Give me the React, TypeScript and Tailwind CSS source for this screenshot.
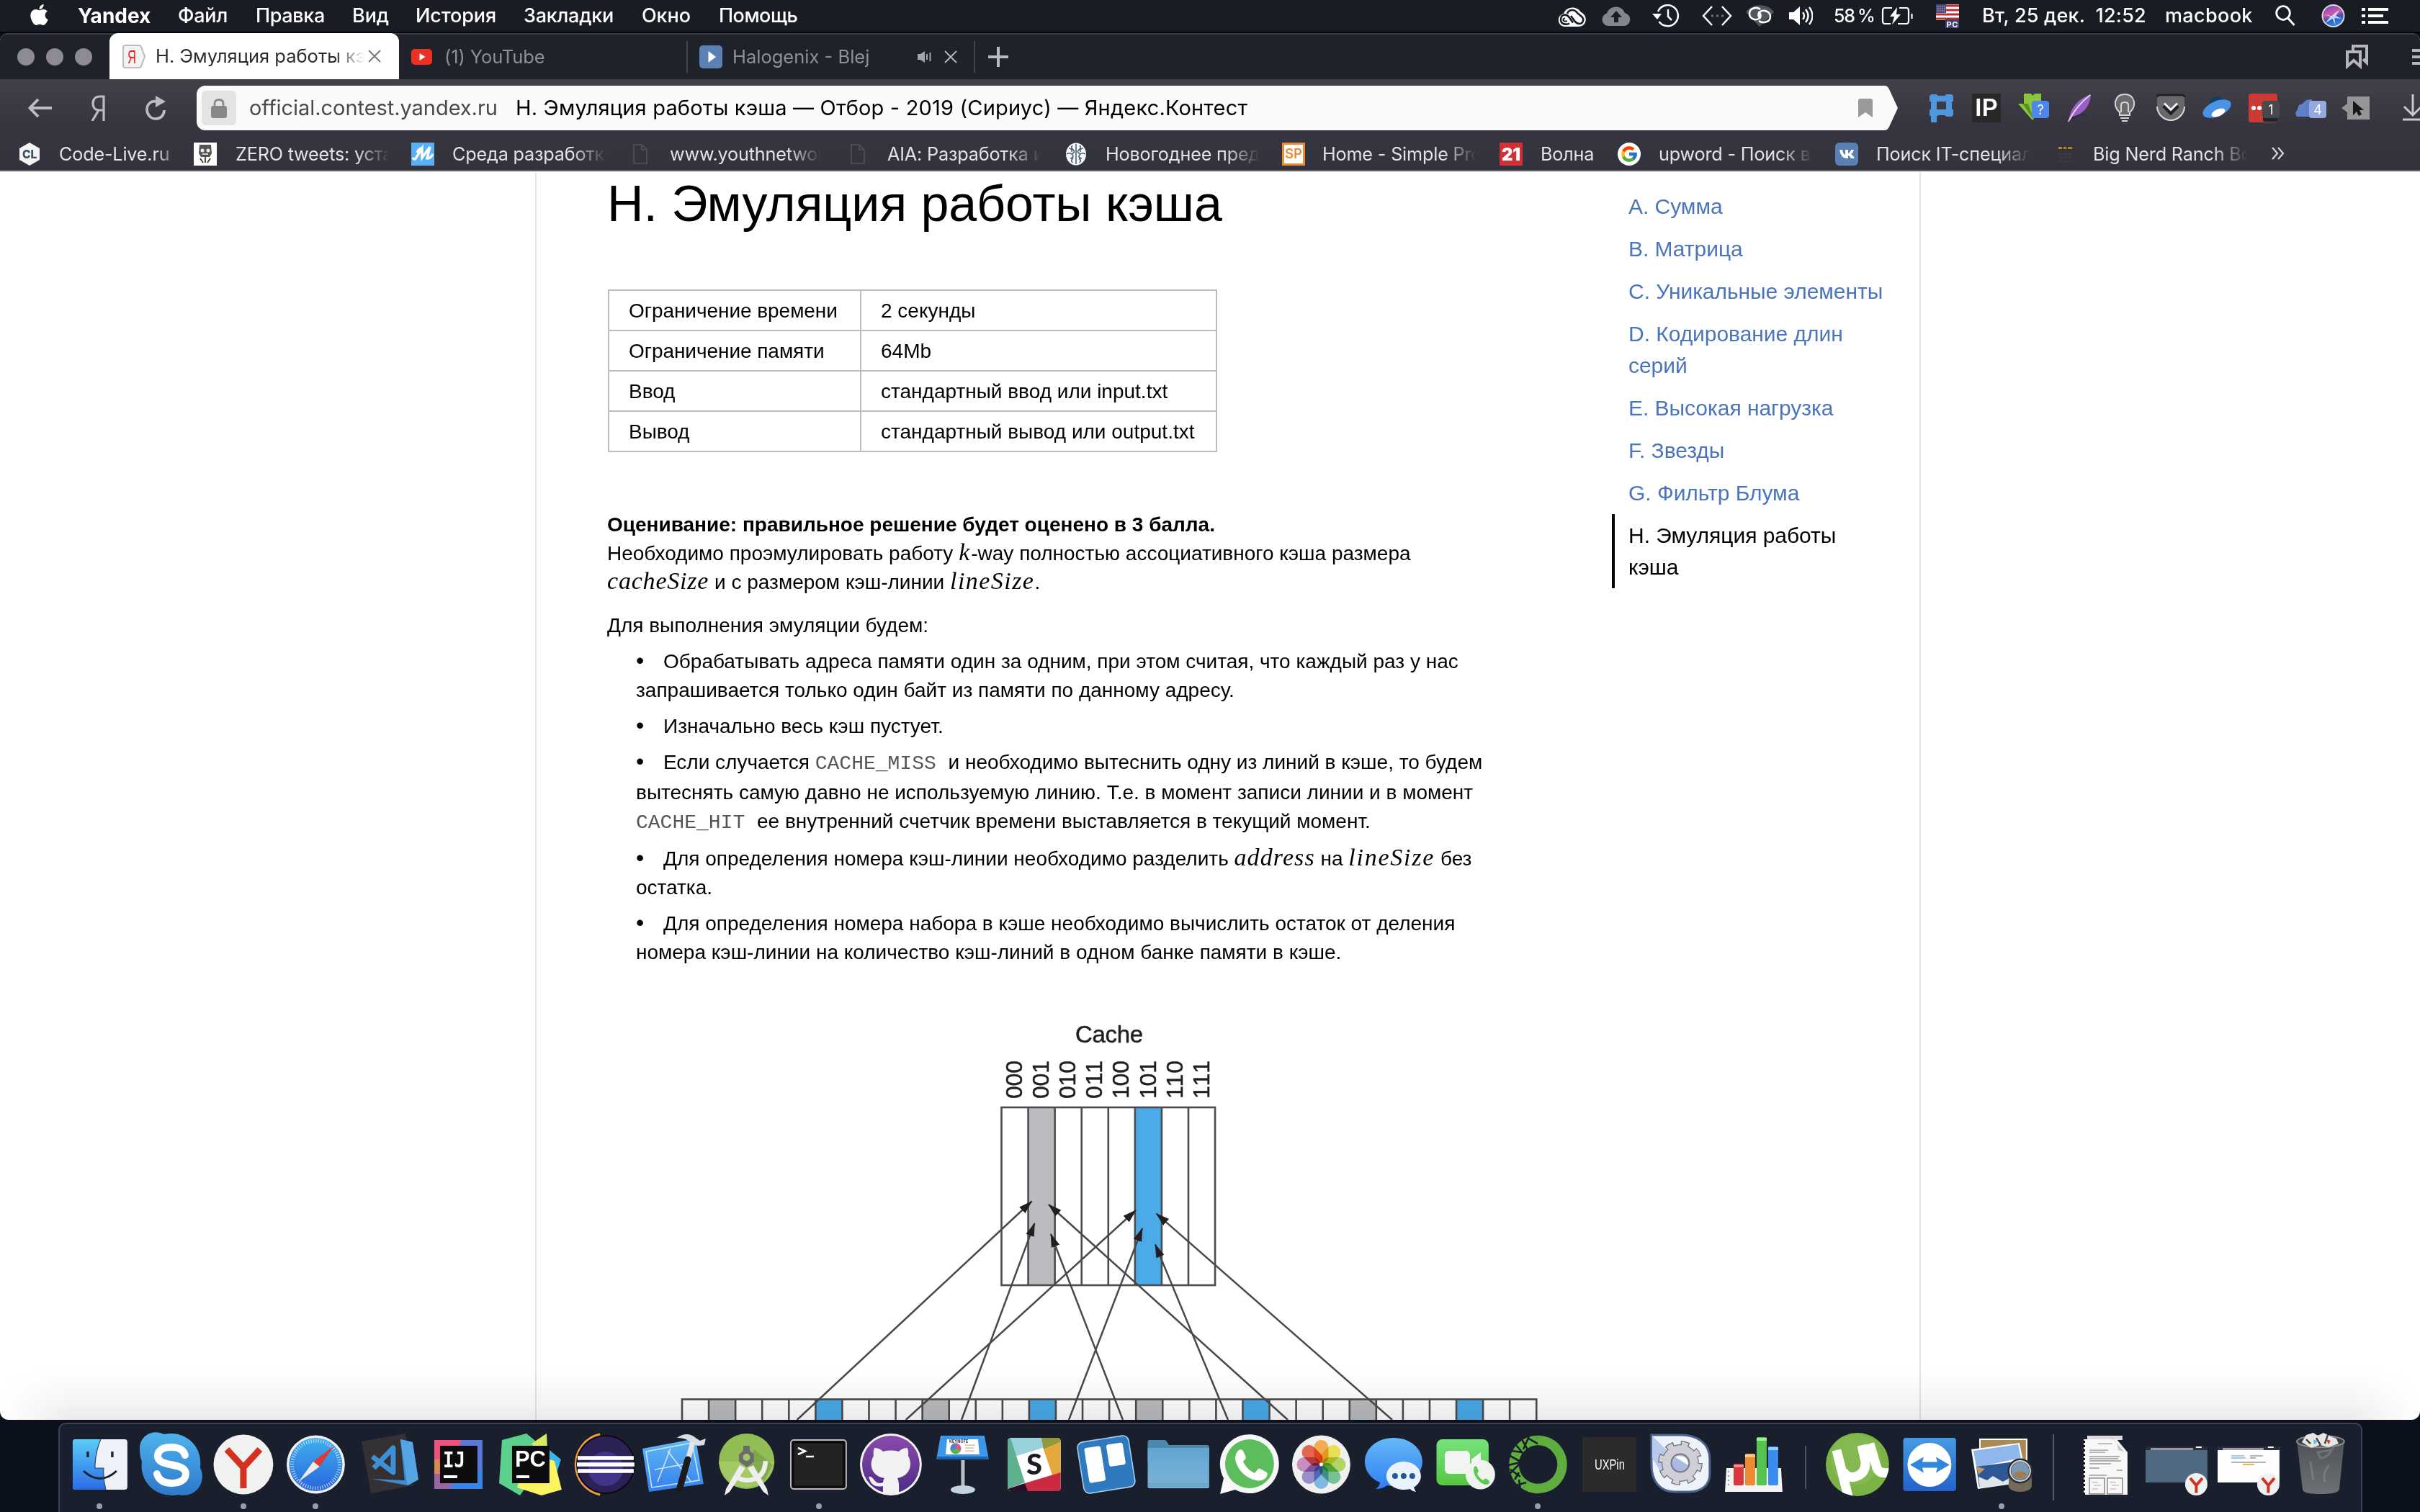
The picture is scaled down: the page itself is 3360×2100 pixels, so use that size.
import type { ReactNode } from 'react';
import { FaApple } from 'react-icons/fa';
import { FcGoogle } from 'react-icons/fc';

/* ---------- macOS menu bar ---------- */

const menus = [
  { label: 'Yandex', cls: 'w-[139px] font-bold text-[28px]' },
  { label: 'Файл', cls: 'w-[108px] tracking-[-0.2px]' },
  { label: 'Правка', cls: 'w-[134px] tracking-[-0.35px]' },
  { label: 'Вид', cls: 'w-[88px] tracking-[-0.1px]' },
  { label: 'История', cls: 'w-[150px] tracking-[-0.13px]' },
  { label: 'Закладки', cls: 'w-[164px] tracking-[-0.24px]' },
  { label: 'Окно', cls: 'w-[107px] tracking-[-0.1px]' },
  { label: 'Помощь', cls: 'tracking-[-0.5px]' },
];

function MenuBar() {
  return (
    <header className="flex h-[46px] shrink-0 items-center border-b-2 border-[#04070f] bg-[#1a1c24] font-['Inter',sans-serif] text-[27px] leading-[44px] font-medium whitespace-pre text-white">
      <FaApple className="mr-[39px] ml-[40px] h-[33px] w-[29px] -translate-y-[2px]" />
      {menus.map((m) => (
        <span key={m.label} className={m.cls}>
          {m.label}
        </span>
      ))}
      <div className="ml-auto flex w-[1197px] shrink-0 items-center">
        <svg className="mt-[3px] mr-[20px] h-[28px] w-[40px]" viewBox="0 0 40 28" fill="none">
          <path d="M13 27H11C-2 27-2 11 8 9 12-2 27-2 32 7c10 4 9 20-4 20Z" fill="#fff" />
          <path d="M16 22.500c-3 2-12 2-12-5 0-8 8-9 12-3l5 7" stroke="#1a1c24" strokeWidth="2.600" />
          <path d="M13 9c2-6 10-7 14-1l7 6c3 4 0 9-4 9-5 0-7-4-9-7l-3-4" stroke="#1a1c24" strokeWidth="2.600" />
          <path d="M10 15.500c-3 0-4 4 0 4h3" stroke="#1a1c24" strokeWidth="2" />
        </svg>
        <svg className="mr-[29px] h-[28px] w-[42px]" viewBox="0 0 42 28">
          <path d="M9 28A9 9 0 0 1 8 10.500 13 12 0 0 1 33 10 9.200 9.200 0 0 1 33 28Z" fill="#84868c" />
          <path d="M21 7l-8 9h5v7h6v-7h5z" fill="#1a1c24" />
        </svg>
        <svg className="mr-[31px] h-[32px] w-[38px]" viewBox="0 0 38 32" fill="none" stroke="#fff" strokeWidth="2.500">
          <path d="M8 10A14.500 14.500 0 1 1 9.500 24" />
          <path d="M22 7v10l5 5" />
          <path d="M0 13h13l-6 8z" fill="#fff" stroke="none" />
        </svg>
        <svg className="mr-[19px] h-[28px] w-[42px]" viewBox="0 0 42 28" fill="none" stroke="#fff" strokeWidth="2.500">
          <path d="M14 1 2 14l12 13M28 1l12 13-12 13" />
          <path d="M13 14h3M20 14h3M27 14h3" stroke="#6d6f76" strokeWidth="3" />
        </svg>
        <svg className="mr-[21px] h-[30px] w-[39px]" viewBox="0 0 39 30" fill="none">
          <path d="M0 10C8-3 31-3 39 10L19 30z" fill="#54565d" />
          <path d="M20 6c-5-4-15-2-15 6 0 7 8 10 13 7 4-3 3-8-1-9" stroke="#fff" strokeWidth="2.600" />
          <path d="M18 22c5 4 16 2 16-6 0-7-9-10-14-7-4 3-3 8 1 9" stroke="#fff" strokeWidth="2.600" />
        </svg>
        <svg className="mr-[29px] h-[28px] w-[33px]" viewBox="0 0 33 28" fill="none" stroke="#fff" strokeWidth="2.400">
          <path d="M0 9h6l9-8v26l-9-8H0z" fill="#fff" stroke="none" />
          <path d="M19 9q4 5 0 10M23 5q7 9 0 18M28 2q9 12 0 24" />
        </svg>
        <span className="w-[66px] text-[25px] tracking-[-1.3px] [word-spacing:-1px]">58 %</span>
        <svg className="mr-[31px] h-[26px] w-[45px]" viewBox="0 0 45 26" fill="none" stroke="#fff" strokeWidth="2.200">
          <path d="M15 2H5Q2 2 2 6v14q0 4 3 4h8M25 2h10q3 0 3 4v14q0 4-3 4H23M42.500 10v7" />
          <path d="M22 1 12 14h6l-3 11 12-14h-6z" fill="#fff" stroke="none" />
        </svg>
        <svg className="mr-[32px] h-[34px] w-[32px]" viewBox="0 0 32 34">
          <path d="M0 1h32v22H0z" fill="#fff" />
          <path d="M14 3h18M14 9h18M0 15h32M0 21h32" stroke="#b5302f" strokeWidth="3.200" />
          <path d="M0 1h14v12H0z" fill="#4a4878" />
          <path d="M2 4h11M2 7h11M2 10h11" stroke="#d8d8e6" strokeWidth="1" strokeDasharray="1.500 1.500" />
          <path d="M13 22h19v12H13z" fill="#43416f" />
          <text x="14.500" y="32.500" fontSize="11" fontWeight="700" fill="#fff" textLength="16">PC</text>
        </svg>
        <span className="w-[254px] tracking-[0.19px]">Вт, 25 дек.{'  '}12:52</span>
        <span className="w-[153px] tracking-[0.35px]">macbook</span>
        <svg className="mr-[36px] h-[30px] w-[28px]" viewBox="0 0 28 30" fill="none" stroke="#fff" strokeWidth="2.800">
          <circle cx="11" cy="11" r="9.300" />
          <path d="m17.500 18 9 10" />
        </svg>
        <svg className="mr-[23px] h-[34px] w-[33px]" viewBox="0 0 34 34">
          <defs>
            <linearGradient id="siri" x1=".3" y1="0" x2=".6" y2="1">
              <stop offset="0" stopColor="#6a4fc8" />
              <stop offset=".4" stopColor="#d8559f" />
              <stop offset=".6" stopColor="#3a53b8" />
              <stop offset="1" stopColor="#2f8fe8" />
            </linearGradient>
          </defs>
          <circle cx="17" cy="17" r="15.500" fill="url(#siri)" stroke="#d7d9e4" strokeWidth="2" />
          <path d="m17 15 9-7-5 9 8 4-10-1 1 10-4-9-10 6 7-9-9-3 11 2z" fill="#cfeeff" fillOpacity=".85" />
        </svg>
        <svg className="h-[22px] w-[37px]" viewBox="0 0 37 22" fill="#fff">
          <path d="M0 0h5v4H0zM9 0h28v4H9zM0 9h5v4H0zM9 9h21v4H9zM0 18h5v4H0zM9 18h28v4H9z" />
        </svg>
      </div>
    </header>
  );
}

/* ---------- Browser chrome ---------- */

function Close({ className }: { className: string }) {
  return (
    <svg className={className} viewBox="0 0 18 18" fill="none" strokeWidth="2">
      <path d="m1 1 16 16M17 1 1 17" stroke="currentColor" />
    </svg>
  );
}

function TabBar() {
  return (
    <div className="flex h-[64px] shrink-0 items-stretch border-t-2 border-[#353a45] bg-[#20222b] font-['Inter',sans-serif] text-[25.5px] whitespace-nowrap text-[#8f9095]">
      <div className="flex w-[152px] items-center gap-[16px] pl-[24px]">
        <i className="size-[24px] rounded-full bg-[#8e8c92]" />
        <i className="size-[24px] rounded-full bg-[#8e8c92]" />
        <i className="size-[24px] rounded-full bg-[#8e8c92]" />
      </div>
      <div className="-mt-[2px] flex w-[402px] items-center rounded-t-[12px] bg-white pl-[18px] text-[#2c2c2c]">
        <svg className="mr-[14px] h-[33px] w-[32px] shrink-0" viewBox="0 0 32 33">
          <path d="M4 1h19q2 0 3 2l5 13.500L26 30q-1 2-3 2H4q-3 0-3-3V4q0-3 3-3Z" fill="#f3f3f3" stroke="#bdbdbd" strokeWidth="2" />
          <text x="7" y="26" fontSize="26" fontFamily="Liberation Sans" fill="#d6281f" textLength="12" lengthAdjust="spacingAndGlyphs">Я</text>
        </svg>
        <span className="w-[290px] overflow-hidden [mask-image:linear-gradient(to_right,black_86%,transparent_100%)]">H. Эмуляция работы кэша</span>
        <Close className="ml-[5px] size-[18px] text-[#77777b]" />
      </div>
      <div className="flex w-[399px] items-center pl-[17px]">
        <svg className="mr-[17px] h-[22px] w-[29px]" viewBox="0 0 29 22">
          <rect width="29" height="22" rx="5" fill="#e93223" />
          <path d="m11.500 6 8 5-8 5z" fill="#fff" />
        </svg>
        <span className="tracking-[-0.1px]">(1) YouTube</span>
      </div>
      <div className="flex w-[399px] items-center">
        <i className="mr-[16px] h-[44px] w-[2px] bg-[#43454d]" />
        <svg className="mr-[14px] size-[32px]" viewBox="0 0 32 32">
          <rect width="32" height="32" rx="5" fill="#5a80b4" />
          <path d="m12.500 8 10.500 8-10.500 8z" fill="#fff" />
        </svg>
        <span className="w-[257px]">Halogenix - Blej</span>
        <svg className="mr-[18px] h-[16px] w-[19px]" viewBox="0 0 19 16" stroke="#a5a6aa" fill="none" strokeWidth="2">
          <path d="M0 4h4l6-4v16l-6-4H0z" fill="#a5a6aa" stroke="none" />
          <path d="M13 4v8M17.500 2v12" />
        </svg>
        <Close className="size-[18px] text-[#b6b7ba]" />
      </div>
      <div className="flex flex-1 items-center">
        <i className="mr-[18px] h-[44px] w-[2px] bg-[#43454d]" />
        <svg className="size-[28px]" viewBox="0 0 28 28" stroke="#bcbcc0" strokeWidth="4">
          <path d="M14 0v28M0 14h28" />
        </svg>
        <svg className="mr-[60px] ml-auto h-[34px] w-[31px]" viewBox="0 0 31 34" fill="none" stroke="#b6b6ba" strokeWidth="4">
          <path d="M2 10h18v20l-9-8-9 8z" />
          <path d="M10 8V2h19v23l-5-5" />
        </svg>
        <svg className="h-[22px] w-[12px]" viewBox="0 0 12 22" stroke="#b6b6ba" strokeWidth="4">
          <path d="M1 2h11M1 11h11M1 20h11" />
        </svg>
      </div>
    </div>
  );
}

function Badge({ x, label, fill, y = 10 }: { x: number; label: string; fill: string; y?: number }) {
  return (
    <g>
      <rect x={x} y={y} width="24" height="24" rx="4" fill={fill} />
      <text x={x + 12} y={y + 19} fontSize="18" textAnchor="middle" fill="#fff">
        {label}
      </text>
    </g>
  );
}

function Extensions() {
  return (
    <div className="flex items-center font-['Inter',sans-serif]">
      <svg className="w-[60px]" height="40" viewBox="0 0 60 40" fill="none" stroke="#4f97dc" strokeWidth="8">
        <path d="M7 1v39M28 1v31M1 7h33M1 26h33" />
        <path d="M7 2v9M28 2v9M7 22v9M28 22v9" strokeWidth="11" />
      </svg>
      <svg className="w-[64px]" height="40" viewBox="0 0 64 40">
        <path d="M0 0h40v40H0z" fill="#2a2826" />
        <text x="4" y="31" fontSize="32" fontWeight="600" fill="#fff" textLength="32" lengthAdjust="spacingAndGlyphs">IP</text>
      </svg>
      <svg className="w-[69px]" height="40" viewBox="0 0 69 40">
        <path d="M8 0h10l2 3 3-3h9v10h7L20 37 0 14h8z" fill="#8cc63f" />
        <path d="M6 14h8l8 23z" fill="#5c8f22" />
        <Badge x={19} label="?" fill="#4f86ec" />
      </svg>
      <svg className="w-[64px]" height="40" viewBox="0 0 64 40">
        <path d="M1 39C3 22 12 8 32 1c-1 16-10 28-26 31z" fill="#9a5fc4" />
        <path d="M1 39C7 26 18 12 31 2" stroke="#e8d3f5" strokeWidth="2" fill="none" />
        <path d="M2 39c8-8 16-13 25-8" stroke="#241f2c" strokeWidth="2" fill="none" opacity=".5" />
      </svg>
      <svg className="w-[59px]" height="40" viewBox="0 0 59 40" fill="none" stroke="#d6d6d6" strokeWidth="2">
        <path d="M8 26C-3 16 2 1 15 1s18 15 7 25v4H8z" fill="#6a6a6c" />
        <path d="M10 26V16q0-4 5-4t5 4v10M8 30h14M9 34h12M11 38h8" />
      </svg>
      <svg className="w-[64px]" height="40" viewBox="0 0 64 40">
        <path d="M3 3h34q2 0 2 2v12c0 11-9 20-19 20S1 28 1 17V5q0-2 2-2Z" fill="#69696b" />
        <path d="M1 18c0 10 9 19 19 19s19-9 19-19" fill="none" stroke="#d9d9d9" strokeWidth="2" />
        <path d="M1 5q0-3 3-3h32q3 0 3 3" fill="none" stroke="#1d1d20" strokeWidth="2.500" />
        <path d="m10 17 10 10 10-10" fill="none" stroke="#1f2026" strokeWidth="5" />
        <path d="m11 13.500 9 9 9-9" fill="none" stroke="#f4f4f4" strokeWidth="3" />
      </svg>
      <svg className="w-[64px]" height="40" viewBox="0 0 64 40">
        <path d="M9 16C12 2 26 1 34 12z" fill="#123c66" />
        <ellipse cx="20" cy="21" rx="21" ry="10.500" transform="rotate(-24 20 21)" fill="#4a92e6" />
        <ellipse cx="22" cy="26.500" rx="10" ry="5" transform="rotate(-24 22 26.500)" fill="#fff" />
      </svg>
      <svg className="w-[64px]" height="40" viewBox="0 0 64 40">
        <rect width="40" height="40" rx="4" fill="#cc3b33" />
        <circle cx="7" cy="20" r="3" fill="#fff" />
        <circle cx="15" cy="20" r="3" fill="#fff" />
        <rect x="20" y="26" width="20" height="13" rx="3" fill="#17272f" />
        <Badge x={19} label="1" fill="#48494b" />
      </svg>
      <svg className="w-[65px]" height="40" viewBox="0 0 65 40">
        <path d="M3 32q-4-5 1-10 0-7 7-8Q15 7 24 8v24z" fill="#5f7fc6" />
        <Badge x={20} label="4" fill="#94aadf" />
      </svg>
      <svg className="w-[85px]" height="40" viewBox="0 0 85 40">
        <path d="M8 4h31v32H8V26l-8-6 8-6z" fill="#959597" />
        <path d="M16 10v20l5-5 3 6 4-2-3-6h6z" fill="#17171a" />
      </svg>
      <svg className="w-[24px]" height="40" viewBox="0 0 24 40" fill="none" stroke="#c9c9cc" strokeWidth="3">
        <path d="M14 1v27M2 18l12 12 12-12M0 36h28" />
      </svg>
    </div>
  );
}

function Toolbar() {
  return (
    <div className="flex h-[80px] shrink-0 items-center font-['Inter',sans-serif] text-[29px] whitespace-nowrap">
      <svg className="mr-[54px] ml-[39px] h-[26px] w-[33px]" viewBox="0 0 33 26" fill="none" stroke="#bdbdc1" strokeWidth="3.800">
        <path d="M14 1 2.500 13 14 25M3 13h30" />
      </svg>
      <svg className="mr-[56px] h-[36px] w-[20px]" viewBox="0 0 20 36" fill="none" stroke="#bdbdc1" strokeWidth="3.200">
        <path d="M18 36V2h-5C6 2 3 6 3 12c0 5 3 9 9 9h6M11 21 2 36" />
      </svg>
      <svg className="mr-[43px] h-[34px] w-[28px]" viewBox="0 0 28 34" fill="none" stroke="#bdbdc1" strokeWidth="3.600">
        <path d="M15 8C8 6 2 12 2 19c0 7 5 13 12 13s12-5 12-12" />
        <path d="m14 0 14 8-14 8z" fill="#bdbdc1" stroke="none" />
      </svg>
      <div className="flex h-[62px] w-[2343px] items-center rounded-l-[12px] bg-[#fafafa] pl-[7px]">
        <div className="flex h-[48px] w-[48px] items-center justify-center rounded-[6px] bg-[#e4e4e4]">
          <svg className="h-[27px] w-[22px]" viewBox="0 0 22 27">
            <rect y="10" width="22" height="17" rx="3" fill="#888" />
            <path d="M5 11V7q0-5.500 6-5.500T17 7v4" fill="none" stroke="#888" strokeWidth="2.800" />
          </svg>
        </div>
        <span className="ml-[18px] w-[370px] tracking-[-0.05px] text-[#4a4a4a]">official.contest.yandex.ru</span>
        <span className="tracking-[0.18px] text-black">H. Эмуляция работы кэша — Отбор - 2019 (Сириус) — Яндекс.Контест</span>
        <svg className="mr-[16px] ml-auto h-[26px] w-[20px]" viewBox="0 0 20 26">
          <path d="M3 0h14q3 0 3 3v23l-10-7-10 7V3q0-3 3-3Z" fill="#9a9a9a" />
        </svg>
      </div>
      <svg className="mr-[43px] h-[62px] w-[19px]" viewBox="0 0 19 62">
        <path d="M0 0q5 0 7 5l12 26L7 57q-2 5-7 5z" fill="#fafafa" />
      </svg>
      <Extensions />
    </div>
  );
}

function PageIcon() {
  return (
    <svg className="h-[28px] w-[20px]" viewBox="0 0 20 28" fill="none" stroke="#4b4b4b" strokeWidth="2">
      <path d="M1 1h11l7 7v19H1zM12 1v7h7" />
    </svg>
  );
}

const bookmarks: { icon: ReactNode; label: string; box: string; pad: string; text: string }[] = [
  {
    icon: (
      <svg className="size-[32px]" viewBox="0 0 32 32">
        <path d="M16 0 30 8v16l-14 8L2 24V8z" fill="#f4f4f4" />
        <text x="6" y="22" fontSize="16" fontWeight="800" fill="#3b5161" textLength="20" lengthAdjust="spacingAndGlyphs">CL</text>
      </svg>
    ),
    label: 'Code-Live.ru', box: 'w-[244px]', pad: 'w-[57px]', text: 'w-[170px]',
  },
  {
    icon: (
      <svg className="size-[32px]" viewBox="0 0 32 32">
        <path d="M0 0h32v32H0z" fill="#fff" />
        <path d="M8 3h16l1 12-3 5H10l-3-5z" fill="#555" />
        <circle cx="12" cy="11" r="2.500" fill="#eee" />
        <circle cx="20" cy="11" r="2.500" fill="#eee" />
        <path d="M13 17h6M16 20v8M9 22l4 6M23 22l-4 6" stroke="#444" strokeWidth="2" />
        <path d="M12 16h8" stroke="#fff" strokeWidth="1.500" />
      </svg>
    ),
    label: 'ZERO tweets: установка', box: 'w-[302px]', pad: 'w-[58px]', text: 'w-[214px]',
  },
  {
    icon: (
      <svg className="size-[32px]" viewBox="0 0 32 32">
        <path d="M0 0h32v32H0z" fill="#58b1f3" />
        <path d="M2 21q3 5 6-2L15 8v13L26 6l-4 16q4 1 8-6M8 14q3-7 8-6" fill="none" stroke="#fff" strokeWidth="3.400" />
      </svg>
    ),
    label: 'Среда разработки', box: 'w-[308px]', pad: 'w-[57px]', text: 'w-[214px]',
  },
  { icon: <PageIcon />, label: 'www.youthnetwork', box: 'w-[302px]', pad: 'w-[51px]', text: 'w-[210px]' },
  { icon: <PageIcon />, label: 'AIA: Разработка ин', box: 'w-[297px]', pad: 'w-[51px]', text: 'w-[214px]' },
  {
    icon: (
      <svg className="size-[32px]" viewBox="0 0 32 32" fill="none" stroke="#4b6072" strokeWidth="1.600">
        <ellipse cx="16" cy="16" rx="14" ry="15.500" fill="#f5f7f8" stroke="none" />
        <path d="M16 2v28M11 4q-3 3 1 6t-2 6M6 8q5 0 4 5M3 16q5-3 8 1t-3 5M12 22q-4 2-1 6M21 4q3 3-1 6t2 6M26 8q-5 0-4 5M29 16q-5-3-8 1t3 5M20 22q4 2 1 6" />
      </svg>
    ),
    label: 'Новогоднее предл', box: 'w-[302px]', pad: 'w-[57px]', text: 'w-[214px]',
  },
  {
    icon: (
      <svg className="size-[32px]" viewBox="0 0 32 32">
        <path d="M1.500 1.500h29v29h-29z" fill="#fff" stroke="#ea8b36" strokeWidth="3" />
        <text x="4" y="22" fontSize="18" fontWeight="600" fill="#ea8b36" textLength="24" lengthAdjust="spacingAndGlyphs">SP</text>
      </svg>
    ),
    label: 'Home - Simple Prog', box: 'w-[302px]', pad: 'w-[56px]', text: 'w-[214px]',
  },
  {
    icon: (
      <svg className="size-[32px]" viewBox="0 0 32 32">
        <path d="M0 0h32v32H0z" fill="#cf3035" />
        <text x="3" y="25" fontSize="24" fontWeight="900" fill="#fff" textLength="26" lengthAdjust="spacingAndGlyphs">21</text>
      </svg>
    ),
    label: 'Волна', box: 'w-[164px]', pad: 'w-[57px]', text: 'w-[100px]',
  },
  {
    icon: (
      <span className="flex size-[32px] items-center justify-center rounded-full bg-white">
        <FcGoogle className="size-[26px]" />
      </span>
    ),
    label: 'upword - Поиск в Google', box: 'w-[302px]', pad: 'w-[57px]', text: 'w-[214px]',
  },
  {
    icon: (
      <svg className="size-[32px]" viewBox="0 0 32 32">
        <rect width="32" height="32" rx="6" fill="#5a80b4" />
        <path d="M6 10h4q1 6 4 7v-7h4v5q3-1 4-5h4q-1 4-4 6 3 2 5 6h-5q-1-3-4-4v4h-2Q8 22 6 10Z" fill="#fff" />
      </svg>
    ),
    label: 'Поиск IT-специали', box: 'w-[306px]', pad: 'w-[57px]', text: 'w-[214px]',
  },
  {
    icon: (
      <svg className="h-[28px] w-[28px]" viewBox="0 0 28 28">
        <path d="M4 4h5v3H4zM11 4h4v3h-4zM17 4h6v3h-6z" fill="#b3812c" />
        <path d="M4 14h18M5 19h16M3 24h20" stroke="#3d3c3f" strokeWidth="2" strokeDasharray="5 2" />
      </svg>
    ),
    label: 'Big Nerd Ranch Books', box: 'w-[293px]', pad: 'w-[52px]', text: 'w-[214px]',
  },
];

function BookmarkBar() {
  return (
    <div className="flex h-[47px] shrink-0 items-center pt-[2px] pl-[25px] font-['Inter',sans-serif] text-[25.2px] tracking-[-0.17px] whitespace-nowrap text-[#e2e2e4]">
      {bookmarks.map((b) => (
        <div key={b.label} className={`flex shrink-0 items-center ${b.box}`}>
          <span className={`shrink-0 ${b.pad}`}>{b.icon}</span>
          <span className={`overflow-hidden [mask-image:linear-gradient(to_right,black_78%,transparent_100%)] ${b.text}`}>{b.label}</span>
        </div>
      ))}
      <svg className="-mt-[4px] ml-[7px] h-[18px] w-[18px]" viewBox="0 0 18 18" fill="none" stroke="#d8d8da" strokeWidth="2.200">
        <path d="m1 1 7 8-7 8M9 1l7 8-7 8" />
      </svg>
    </div>
  );
}

/* ---------- Page ---------- */

const limits = [
  ['Ограничение времени', '2 секунды'],
  ['Ограничение памяти', '64Mb'],
  ['Ввод', 'стандартный ввод или input.txt'],
  ['Вывод', 'стандартный вывод или output.txt'],
];

function M({ children, className = '' }: { children: string; className?: string }) {
  return <i className={`font-['Liberation_Serif',serif] text-[34px] leading-none ${className}`}>{children}</i>;
}

function Code({ children }: { children: string }) {
  return <code className="font-['Liberation_Mono',monospace] text-[28px] leading-none text-[#555]">{children}&nbsp;</code>;
}

function Item({ children, className = 'mt-[10px]' }: { children: ReactNode; className?: string }) {
  return (
    <li className={`ml-[40px] ${className}`}>
      <span className="inline-block w-[38px] text-[32px] leading-none">•</span>
      {children}
    </li>
  );
}

const COL = 37.07;
const arrows: [number, number, number, number][] = [
  [1106.6, 1972, 1432.5, 1668.5],
  [1335, 1972, 1436.4, 1699],
  [1788, 1972, 1456, 1673],
  [1559, 1972, 1459, 1714],
  [1257.7, 1972, 1577, 1681],
  [1484, 1972, 1586, 1706],
  [1933, 1972, 1605.6, 1685.6],
  [1705, 1972, 1604, 1728.5],
];

function CacheDiagram() {
  return (
    <svg className="block h-[630px] w-[1394px]" viewBox="843 1342 1394 630" fontFamily="Liberation Sans" fill="#231f20">
      <defs>
        <marker id="head" markerUnits="userSpaceOnUse" markerWidth="20" markerHeight="12" refX="18" refY="6" orient="auto">
          <path d="M0 0 19 6 0 12Z" fill="#231f20" />
        </marker>
      </defs>
      <g stroke="#231f20" strokeWidth=".5">
        <text x="1493" y="1448" fontSize="33" textLength="94">Cache</text>
        {['000', '001', '010', '011', '100', '101', '110', '111'].map((t, i) => (
          <text key={t} transform={`translate(${1419 + i * 37.1} 1526) rotate(-90)`} fontSize="32" textLength="53">
            {t}
          </text>
        ))}
      </g>
      <rect x={1390.5 + COL} y="1538" width={COL} height="247" fill="#bbbcc0" />
      <rect x={1390.5 + COL * 5} y="1538" width={COL} height="247" fill="#4aabe8" />
      <g stroke="#4d4b4c" strokeWidth="2.600" fill="none">
        <rect x="1390.5" y="1538" width={COL * 8} height="247" />
        {[1, 2, 3, 4, 5, 6, 7].map((i) => (
          <path key={i} d={`M${1390.5 + COL * i} 1538v247`} />
        ))}
      </g>
      {[1, 9, 17, 25].map((i) => (
        <rect key={i} x={947 + COL * i} y="1943" width={COL} height="40" fill="#bbbcc0" />
      ))}
      {[5, 13, 21, 29].map((i) => (
        <rect key={i} x={947 + COL * i} y="1943" width={COL} height="40" fill="#4aabe8" />
      ))}
      <g stroke="#4d4b4c" strokeWidth="2.600" fill="none">
        <rect x="947" y="1943.5" width={COL * 32} height="40" />
        {Array.from({ length: 31 }, (_, i) => (
          <path key={i} d={`M${947 + COL * (i + 1)} 1943v40`} />
        ))}
      </g>
      <g stroke="#4a4849" strokeWidth="2.500">
        {arrows.map(([x1, y1, x2, y2]) => (
          <line key={`${x1}`} x1={x1} y1={y1} x2={x2} y2={y2} markerEnd="url(#head)" />
        ))}
      </g>
    </svg>
  );
}

function Article() {
  return (
    <main className="w-[1394px] shrink-0 text-[28px] leading-[40px] whitespace-nowrap">
      <h1 className="mt-[4px] text-[70px] leading-[80px] tracking-[-0.1px]">H. Эмуляция работы кэша</h1>
      <div className="mt-[79px] ml-[1px] w-[846px] divide-y-2 divide-[#bdbdbd] border-2 border-[#bdbdbd] leading-[56px]">
        {limits.map(([k, v]) => (
          <div key={k} className="flex h-[56px] nth-4:h-[54px]">
            <div className="w-[350px] border-r-2 border-[#bdbdbd] pt-[1px] pl-[27px] leading-[54px] tracking-[-0.05px]">{k}</div>
            <div className="pt-[1px] pl-[27px] leading-[54px]">{v}</div>
          </div>
        ))}
      </div>
      <p className="mt-[81px] font-bold">Оценивание: правильное решение будет оценено в 3 балла.</p>
      <p>
        Необходимо проэмулировать работу <M className="tracking-[2px]">k</M>-way полностью ассоциативного кэша размера
      </p>
      <p>
        <M className="tracking-[0.8px]">cacheSize</M> и с размером кэш-линии <M className="tracking-[1.45px]">lineSize</M>.
      </p>
      <p className="mt-[20px]">Для выполнения эмуляции будем:</p>
      <ul className="h-[443px]">
        <Item>
          Обрабатывать адреса памяти один за одним, при этом считая, что каждый раз у нас
          <br />
          запрашивается только один байт из памяти по данному адресу.
        </Item>
        <Item>Изначально весь кэш пустует.</Item>
        <Item>
          Если случается <Code>CACHE_MISS</Code>и необходимо вытеснить одну из линий в кэше, то будем
          <span className="block h-[2px]" />
          вытеснять самую давно не используемую линию. Т.е. в момент записи линии и в момент
          <br />
          <Code>CACHE_HIT</Code>ее внутренний счетчик времени выставляется в текущий момент.
        </Item>
        <Item className="mt-[12px]">
          Для определения номера кэш-линии необходимо разделить <M className="tracking-[1.1px]">address</M> на{' '}
          <M className="tracking-[1.75px]">lineSize</M> без
          <br />
          остатка.
        </Item>
        <Item>
          Для определения номера набора в кэше необходимо вычислить остаток от деления
          <br />
          номера кэш-линии на количество кэш-линий в одном банке памяти в кэше.
        </Item>
      </ul>
      <CacheDiagram />
    </main>
  );
}

const problems = [
  'A. Сумма',
  'B. Матрица',
  'C. Уникальные элементы',
  'D. Кодирование длин серий',
  'E. Высокая нагрузка',
  'F. Звезды',
  'G. Фильтр Блума',
];

function Sidebar() {
  return (
    <nav className="mt-[18px] w-[383px] text-[30px] leading-[44px] tracking-[-0.04px]">
      {problems.map((p) => (
        <a key={p} className="block border-l-4 border-transparent py-[7.5px] pl-[19px] text-[#4a74bb]">
          {p}
        </a>
      ))}
      <a className="block border-l-4 border-black py-[7.5px] pl-[19px] text-black">H. Эмуляция работы кэша</a>
    </nav>
  );
}

/* ---------- Dock ---------- */

const petals = [
  ['#f2a33a', 0], ['#e8dc3c', 45], ['#a9cf4c', 90], ['#64b98a', 135],
  ['#6fb0dd', 180], ['#8c7fc4', 225], ['#c27fb8', 270], ['#e4503f', 315],
] as const;

const dockApps: { name: string; on?: boolean; art: ReactNode }[] = [
  {
    name: 'Finder', on: true,
    art: (
      <>
        <rect x="12" y="14" width="76" height="70" rx="4" fill="#eef2f8" />
        <path d="M16 14h35C45 28 43 42 43 54h12q-1 15 3 30H16q-4 0-4-4V18q0-4 4-4Z" fill="url(#finder)" />
        <path d="M33 31v8M67 31v8" stroke="#1c2a3c" strokeWidth="3.500" />
        <path d="M27 58q23 21 46 0" fill="none" stroke="#16212f" strokeWidth="3" />
        <path d="M51 14C45 28 43 42 43 54h12q-1 15 3 30" fill="none" stroke="#27476e" strokeWidth="1.200" />
      </>
    ),
  },
  {
    name: 'Skype',
    art: (
      <>
        <path d="M6 27C6 8 25-1 40 7c30-6 54 17 50 46 10 20-6 44-30 38C30 97 5 74 9 45 7 40 6 34 6 27Z" fill="url(#skype)" />
        <path d="M69 36C66 26 57 25 49 25c-10 0-18 4-18 12 0 17 39 8 39 25 0 9-9 13-19 13-12 0-19-5-21-13" fill="none" stroke="#fff" strokeWidth="10" strokeLinecap="round" />
      </>
    ),
  },
  {
    name: 'Yandex', on: true,
    art: (
      <>
        <circle cx="50" cy="49" r="41.500" fill="#f1f1f1" />
        <path d="m27 28 23 25 23-25M50 50v32" fill="none" stroke="#d2321f" strokeWidth="9" />
      </>
    ),
  },
  {
    name: 'Safari', on: true,
    art: (
      <>
        <circle cx="50.500" cy="49" r="40.500" fill="#f0f0f2" />
        <circle cx="50.500" cy="49" r="37" fill="url(#safari)" />
        <circle cx="50.500" cy="49" r="33" fill="none" stroke="#cfe3fb" strokeWidth="5" strokeDasharray="1 2.450" />
        <path d="m76 23-20.200 29-8.800-7z" fill="#e13a35" />
        <path d="m26.600 73 29.200-21-8.800-7z" fill="#ecebe9" />
      </>
    ),
  },
  {
    name: 'Code',
    art: (
      <>
        <path d="M14 17 75 6l11 72-59 11z" fill="#333133" />
        <path d="m68 14 17 4 8 52-15 8-50-9 46 2z" fill="#3b8bd0" />
        <path d="m68 14 17 4 8 52-15 8z" fill="#55a5e4" />
        <path d="m31 54 27-28v34L29 38" fill="none" stroke="#3d90d6" strokeWidth="7" strokeLinejoin="round" />
      </>
    ),
  },
  {
    name: 'IntelliJ IDEA',
    art: (
      <>
        <path d="M15 15h67v68H15z" fill="#5b78d8" />
        <path d="M15 15h38L40 45H15z" fill="#f0527c" />
        <path d="M15 42h20v24H15z" fill="#d98a4e" />
        <path d="M15 62h30L36 83H15z" fill="#98679f" />
        <path d="M36 83 82 55v28z" fill="#3a86e6" />
        <path d="M23 23h52v52H23z" fill="#0d0d0f" />
        <text x="27" y="53" fontFamily="DejaVu Sans Mono" fontSize="31" fontWeight="700" fill="#fff" textLength="31" lengthAdjust="spacingAndGlyphs">IJ</text>
        <path d="M28 66h19" stroke="#fff" strokeWidth="4" />
      </>
    ),
  },
  {
    name: 'PyCharm',
    art: (
      <>
        <path d="M9 15 43 6l17 14 9 22-35 50L5 75z" fill="#5bd08c" />
        <path d="m50 20 21-14 2 40z" fill="#d6ea62" />
        <path d="m70 25 21 17-7 22-16-8z" fill="#3fb6e8" />
        <path d="m74 42 8 2 10 40-28 8-34-11 8-30z" fill="#fbf35f" />
        <path d="M23 23h52v52H23z" fill="#0d0d0f" />
        <text x="27" y="52" fontFamily="Liberation Sans" fontSize="32" fontWeight="700" fill="#fff" textLength="43" lengthAdjust="spacingAndGlyphs">PC</text>
        <path d="M29 66h18" stroke="#fff" strokeWidth="4" />
      </>
    ),
  },
  {
    name: 'Eclipse',
    art: (
      <>
        <path d="M46 7a43 43 0 0 0 0 84 46 46 0 0 1 0-84Z" fill="#f29a3f" stroke="#f29a3f" strokeWidth="3" />
        <circle cx="54" cy="49" r="40" fill="#2c2255" stroke="#0b0a16" strokeWidth="2" />
        <circle cx="54" cy="55" r="24" fill="#43348a" />
        <path d="M15 40h78M14 49h80M15 58h78" stroke="#fff" strokeWidth="5.500" />
      </>
    ),
  },
  {
    name: 'Xcode',
    art: (
      <>
        <path d="M5 27 79 13l11 63-76 11z" fill="url(#xcode)" />
        <path d="m26 73 18-46M40 30l32 42M22 56l50-9M10 31l64-12 10 52-66 10z" fill="none" stroke="#cbe6fb" strokeWidth="1.600" />
        <path d="M53 12q14-10 26 0l6 4 8-3-2 9-8 1-8-2-6-5q-6-4-16-4Z" fill="#d9dde2" />
        <path d="m75 18-7 25" stroke="#e2e6ea" strokeWidth="7" />
        <path d="M68 42 56 85" stroke="#1b1b1e" strokeWidth="9" strokeLinecap="round" />
      </>
    ),
  },
  {
    name: 'Android Studio',
    art: (
      <>
        <circle cx="49.700" cy="44.500" r="38.600" fill="#92bd54" />
        <path d="M11 45h77a38.600 38.600 0 0 1-77 0Z" fill="#a3c964" />
        <path d="m60 28 26 22-12 22-24-24z" fill="#6f9a42" opacity=".6" />
        <path d="m40 50 8 4-22 33-7 5 2-9zM59 50l-8 4 22 33 7 5-2-9z" fill="#eee" />
        <path d="M33 65c18 12 42 6 43-21" fill="none" stroke="#eee" strokeWidth="6.500" />
        <path d="M45 23h9v7l6 5v10l-10 8-11-8V35l6-5z" fill="#6b6b6b" />
        <circle cx="49.500" cy="39" r="5" fill="#a3c964" />
      </>
    ),
  },
  {
    name: 'Terminal', on: true,
    art: (
      <>
        <rect x="11" y="15" width="77" height="68" rx="4" fill="#232323" stroke="#b9babd" strokeWidth="2" />
        <rect x="14" y="18" width="71" height="62" rx="2" fill="none" stroke="#0b0b0b" strokeWidth="3" />
        <path d="m21 26 10 4.500-10 4.500M32 38h11" fill="none" stroke="#fff" strokeWidth="2.600" />
      </>
    ),
  },
  {
    name: 'GitHub',
    art: (
      <>
        <circle cx="50" cy="49" r="43" fill="#f2f2f2" />
        <circle cx="50" cy="49" r="40" fill="url(#github)" />
        <path d="M27 26q7 0 12 5 11-3 22 0 5-5 12-5 2 6 1 11c8 14 0 29-15 31q3 4 2 22-11 3-22 0V79q-15 3-19-10-2-4 2-3 4 2 6 6 4 5 11 2 0-4 2-6C25 66 18 51 26 37q-1-5 1-11Z" fill="#f2f2f2" />
      </>
    ),
  },
  {
    name: 'Keynote',
    art: (
      <>
        <path d="M19 9h61l6 33H13z" fill="#3a97ea" />
        <path d="M14 38h71l1 4H13z" fill="#1d66b4" />
        <path d="M28 14h43l2 21H26z" fill="#fff" />
        <text x="31" y="19" fontSize="5.500" fontWeight="700" fill="#333" fontFamily="Inter">KEYNOTE</text>
        <circle cx="40" cy="27" r="7.500" fill="#56b64b" />
        <path d="M40 27v-7.500a7.500 7.500 0 0 1 7 10z" fill="#e2548b" />
        <path d="M40 27v-7.500a7.500 7.500 0 0 0-7 10z" fill="#3f86dc" />
        <path d="M53 22h14M53 26h12M53 30h13" stroke="#c7b28e" strokeWidth="1.300" />
        <path d="M50 43v40" stroke="#b8bfc7" strokeWidth="5" />
        <ellipse cx="50" cy="84" rx="17" ry="6" fill="#c3d3e2" />
      </>
    ),
  },
  {
    name: 'Slack',
    art: (
      <>
        <g clipPath="url(#tile)">
          <path d="M13 12h74v74H13z" fill="#fff" />
          <path d="M13 12h47l5 13-52 16z" fill="#9ad2db" />
          <path d="M13 12h4l20 62-24 9z" fill="#5fb08f" />
          <path d="M60 12h27v6l-24 10z" fill="#8f9a3a" />
          <path d="m63 28 24-11v46l-11 3z" fill="#e3a73b" />
          <path d="m37 75 50-15v26H40z" fill="#cb2b41" />
          <path d="m13 83 24-8 4 11H13z" fill="#2b0f26" />
        </g>
        <text x="50" y="63" textAnchor="middle" fontFamily="Lato" fontSize="40" fontWeight="900" fill="#1d1c22">S</text>
      </>
    ),
  },
  {
    name: 'Trello',
    art: (
      <g transform="rotate(-9 50 49)">
        <rect x="14" y="13" width="72" height="72" rx="8" fill="#2f7abf" stroke="#a9cdec" strokeWidth="1.600" />
        <rect x="23" y="22" width="23" height="49" rx="3" fill="#fff" />
        <rect x="54" y="22" width="23" height="31" rx="3" fill="#fff" />
      </g>
    ),
  },
  {
    name: 'Downloads',
    art: (
      <>
        <path d="M10 15h21q2 0 3 2l3 5h53q3 0 3 3v20H7.500V18q0-3 2.500-3Z" fill="#4f88ad" />
        <path d="M7.500 26H93v54q0 2-2 2H9.500q-2 0-2-2z" fill="url(#folder)" />
        <path d="M8 76h85M8 79h85" stroke="#5a97be" strokeWidth="1" />
      </>
    ),
  },
  {
    name: 'WhatsApp',
    art: (
      <>
        <path d="M8 90l5-22A41 41 0 1 1 29 84z" fill="#f7f7f7" />
        <circle cx="49" cy="48" r="34" fill="#5cbd5c" />
        <path d="M34 29q4-2 6 1l4 9q0 2-4 6 5 11 16 16l5-6q2-1 3 0l9 5q2 3-1 7-5 6-14 4C41 67 32 55 29 42q0-9 5-13Z" fill="#fff" />
      </>
    ),
  },
  {
    name: 'Photos',
    art: (
      <>
        <circle cx="48.500" cy="49" r="40.500" fill="#f0f0ef" />
        <g className="isolate">
          {petals.map(([fill, angle]) => (
            <rect key={angle} className="mix-blend-multiply" x="38.500" y="15" width="20" height="33" rx="10" fill={fill} fillOpacity=".88" transform={`rotate(${angle} 48.500 49)`} />
          ))}
        </g>
        <circle cx="48.500" cy="49" r="2.500" fill="#fff" />
      </>
    ),
  },
  {
    name: 'Messages',
    art: (
      <>
        <path d="M49 12c23 0 40 15 40 33S71 79 49 79q-5 0-9-1-6 5-16 5 6-4 6-9C16 68 9 57 9 45c0-18 17-33 40-33Z" fill="url(#messages)" />
        <path d="M63 45c13 0 24 9 24 20 0 7-4 12-10 16l3 6q-6-1-8-4-4 1-9 1c-13 0-24-8-24-19s11-20 24-20Z" fill="#eaf3fb" />
        <g fill="#24589d">
          <circle cx="51" cy="65" r="4" />
          <circle cx="63" cy="65" r="4" />
          <circle cx="75" cy="65" r="4" />
        </g>
      </>
    ),
  },
  {
    name: 'FaceTime',
    art: (
      <>
        <rect x="8.500" y="14" width="72.500" height="64" rx="8" fill="url(#facetime)" />
        <rect x="20" y="30" width="35" height="32" rx="6" fill="#f2f4f2" />
        <path d="m57 42 13-10v26l-13-8z" fill="#f2f4f2" />
        <circle cx="69.500" cy="63" r="20.500" fill="#f0f2f0" />
        <path d="M61 52q3-2 4 1l2 5-2 4q3 6 8 9l4-3 5 4q1 3-3 5-7 1-14-8t-4-17Z" fill="#5bcb52" />
      </>
    ),
  },
  {
    name: 'Anaconda', on: true,
    art: (
      <>
        <path d="M49 15.500a33.500 33.500 0 1 1-16 62" fill="none" stroke="#5fad3e" strokeWidth="13.500" />
        <path d="M33 77.500A33.500 33.500 0 0 1 49 15.500" fill="none" stroke="#5fad3e" strokeWidth="13.500" />
        <path d="m10 36 18 10M9 50l17-4M11 62l14-14M18 70l6-10M14 30l14 2M20 22l10 12M28 14l8 14M38 10l-8 18M50 20 36 12M12 56l14 10M26 84 24 70M20 78l14-4" stroke="#191d2b" strokeWidth="2.600" />
      </>
    ),
  },
  {
    name: 'UXPin',
    art: (
      <>
        <path d="M12 11h75.500v76H12z" fill="#2b2b2b" />
        <text x="29" y="56" fontFamily="Liberation Sans" fontSize="20" fill="#fff" textLength="42" lengthAdjust="spacingAndGlyphs">UXPin</text>
      </>
    ),
  },
  {
    name: 'System tool',
    art: (
      <>
        <path d="M8 8h40c25 0 41 12 41 34v20c0 16-12 25-28 25H40C20 87 8 72 8 50z" fill="#eef2fa" stroke="#4c6289" strokeWidth="3" />
        <path d="m9 9 40 40L20 58 9 40z" fill="#b9c9ea" />
        <circle cx="48" cy="47" r="25" fill="none" stroke="#6f707c" strokeWidth="12" strokeDasharray="10.600 9.030" />
        <circle cx="48" cy="47" r="18.500" fill="none" stroke="#6f707c" strokeWidth="15" />
        <circle cx="48" cy="47" r="18.500" fill="none" stroke="#cfcfd5" strokeWidth="12.500" />
        <circle cx="48" cy="47" r="25" fill="none" stroke="#cfcfd5" strokeWidth="9.500" strokeDasharray="8.200 11.430" strokeDashoffset="-1.200" />
        <circle cx="48" cy="47" r="12.500" fill="#a9bbe0" stroke="#77798a" strokeWidth="2" />
        <path d="m40 38 19 12q0-16-19-12Z" fill="#fff" />
      </>
    ),
  },
  {
    name: 'Numbers',
    art: (
      <>
        <path d="M12 54h76l2 33H10z" fill="#f4f4f4" />
        <path d="M15 58v24" stroke="#9a9a9a" strokeWidth="2" strokeDasharray="2 4" />
        <rect x="22" y="48" width="14" height="30" rx="2" fill="#d9383f" />
        <rect x="38" y="34" width="14" height="44" rx="2" fill="#ec8a34" />
        <rect x="54" y="11" width="14" height="67" rx="2" fill="#56c250" />
        <rect x="70" y="24" width="14" height="54" rx="2" fill="#3a8df0" />
        <path d="M22 51h14" stroke="#f49a9c" strokeWidth="3" />
        <path d="M38 37h14" stroke="#f9cd7e" strokeWidth="4" />
        <path d="M54 14h14" stroke="#9df0a0" strokeWidth="4" />
        <path d="M70 27h14" stroke="#8ed6fb" strokeWidth="4" />
      </>
    ),
  },
];

const dockTools: typeof dockApps = [
  {
    name: 'uTorrent',
    art: (
      <>
        <circle cx="50" cy="49" r="44" fill="#7bb346" />
        <circle cx="48" cy="42" r="35" fill="#8bbd58" opacity=".6" />
        <g clipPath="url(#disc)" fill="none" stroke="#fff" strokeWidth="13">
          <path d="m21 29 17 68" />
          <path d="M30 58q6 11 17 8 15-4 14-21l-5-23" />
          <path d="m67 20 10 34q4 9 18 6" />
        </g>
      </>
    ),
  },
  {
    name: 'TeamViewer',
    art: (
      <>
        <rect x="13.500" y="12" width="73.500" height="74" rx="4" fill="url(#team)" />
        <circle cx="50" cy="49.500" r="30.500" fill="#fff" />
        <path d="m23 49.500 19-11-2 7h21l-2-7 19 11-19 11 2-7H40l2 7z" fill="#2f86dc" />
      </>
    ),
  },
  {
    name: 'Preview', on: true,
    art: (
      <>
        <path d="M19 13h67v52H19z" fill="#fff" />
        <path d="M21 15h63v48H21z" fill="#a98a55" />
        <path d="m8 28 67-9 11 54-69 10z" fill="#fff" />
        <path d="m11 30 62-9 4 19-62 13z" fill="#8fb7ec" />
        <path d="m15 52 62-8 6 27-64 9z" fill="#2e5795" />
        <path d="m18 66 12 5 8-6 14 8 12-7 6 9-50 7z" fill="#dfe6ea" />
        <path d="m15 52 12 3-9 8z" fill="#c9975c" />
        <path d="M60 60h32v20q-3 7-16 7t-16-7z" fill="#75695a" />
        <circle cx="76" cy="58" r="15" fill="#7d99b6" stroke="#2b2d31" strokeWidth="5" />
        <circle cx="76" cy="58" r="14" fill="none" stroke="#d6d9dc" strokeWidth="2" />
        <path d="M66 62q10-7 20 0-4 7-10 7t-10-7Z" fill="#a07c50" />
      </>
    ),
  },
];

function YBadge() {
  return (
    <>
      <circle cx="77.500" cy="76.500" r="15.500" fill="#f1f1f1" />
      <path d="m69 68 8.500 10 8.500-10M77.500 76v12.500" fill="none" stroke="#d2321f" strokeWidth="4" />
    </>
  );
}

const dockFiles: typeof dockApps = [
  {
    name: 'Document',
    art: (
      <>
        <path d="M25 9h49v6H25z" fill="#dcdcdc" />
        <path d="M20 14h46l15 18v59H20z" fill="#f7f7f7" />
        <path d="M20.500 16v75" stroke="#111" strokeWidth="3" strokeDasharray="3 3" />
        <path d="M56 9q12 8 12 20 9 1 12 6" fill="#c9c9c9" />
        <path d="M40 20h20M28 29h26M28 32h22M28 38h42M28 41h40M28 44h44M28 48h30M28 54h14M66 57h8M28 64h24" stroke="#9b9b9b" strokeWidth="1.300" />
        <path d="M28 68h21v22H28zM53 68h21v22H53z" fill="none" stroke="#777" strokeWidth="1.300" />
        <path d="M32 74h8M34 78h10M32 83h8M57 74h8M59 78h10M57 83h8" stroke="#aaa" strokeWidth="1" />
      </>
    ),
  },
  {
    name: 'Window A',
    art: (
      <>
        <path d="M7 24h86v50H7z" fill="#4f6a80" />
        <path d="M7 24h86v5H7z" fill="#262c3c" />
        <path d="M14 27.500h59" stroke="#d9d3d8" strokeWidth="2" />
        <path d="M77 25h8" stroke="#fff" strokeWidth="2" />
        <YBadge />
      </>
    ),
  },
  {
    name: 'Window B',
    art: (
      <>
        <path d="M7 24h86v50H7z" fill="#fdfdfd" />
        <path d="M7 24h86v5H7z" fill="#262c3c" />
        <path d="M14 27.500h57" stroke="#d9d3d8" strokeWidth="2" />
        <path d="M77 25h8" stroke="#fff" strokeWidth="2" />
        <path d="M26 37h18M26 40h20" stroke="#8cb2e6" strokeWidth="1.500" />
        <path d="M52 37h18M52 40h8M26 46h48" stroke="#999" strokeWidth="1.300" />
        <path d="M42 49h16" stroke="#e3bd45" strokeWidth="2" />
        <YBadge />
      </>
    ),
  },
  {
    name: 'Trash',
    art: (
      <>
        <path d="M17 16h66l-7 68q-2 6-26 6t-25-6z" fill="url(#trash)" />
        <ellipse cx="50" cy="17" rx="33" ry="8" fill="#3a3d41" stroke="#8c8f93" strokeWidth="2" />
        <path d="m24 18 6-10 10-3 6 4 8-4 10 5 8 3 3 7-14 5-12-3-12 4z" fill="#e6e6e4" />
        <path d="m44 12 6 10M30 14l6 6M60 8l-4 12" stroke="#444" strokeWidth="2.500" />
        <path d="m40 14 6 3-5 4z" fill="#49c5e0" />
        <path d="m58 14 6 2-3 5z" fill="#c0442e" />
        <path d="M46 32q16-2 20-4-6 12-16 12ZM36 45l4 26M62 50q-10 10-6 24" stroke="#8a8d91" strokeWidth="3" opacity=".5" fill="none" />
      </>
    ),
  },
];

function Gradient({ id, from, to }: { id: string; from: string; to: string }) {
  return (
    <linearGradient id={id} x1="0" y1="0" x2="0" y2="1">
      <stop offset="0" stopColor={from} />
      <stop offset="1" stopColor={to} />
    </linearGradient>
  );
}

function DockGroup({ apps }: { apps: typeof dockApps }) {
  return apps.map((a) => (
    <div key={a.name} className="flex w-[99.85px] shrink-0 flex-col items-center">
      <svg className="h-[100px] w-full" viewBox="0 0 100 100">
        {a.art}
      </svg>
      {a.on && <i className="mt-[3px] h-[8px] w-[8px] rounded-full bg-[#9a9db2]" />}
    </div>
  ));
}

function Dock() {
  return (
    <div className="mx-auto mt-[4px] flex h-[124px] w-[3199px] items-start rounded-t-[10px] border-2 border-b-0 border-[#3d424f] bg-[#1a1f2e] pt-[7px] pl-[6px]">
      <svg className="absolute size-0">
        <defs>
          <Gradient id="finder" from="#5ccdf8" to="#2b6be6" />
          <Gradient id="skype" from="#4fb3ec" to="#2f78cc" />
          <Gradient id="safari" from="#3fb0ef" to="#2765dc" />
          <Gradient id="xcode" from="#62b8f2" to="#3480ee" />
          <Gradient id="github" from="#8a4bab" to="#4d2c86" />
          <Gradient id="folder" from="#62a6d3" to="#7ab2d5" />
          <Gradient id="messages" from="#66b8f8" to="#2f7ff2" />
          <Gradient id="facetime" from="#76e37c" to="#55c740" />
          <Gradient id="team" from="#459be4" to="#2463c9" />
          <Gradient id="trash" from="#4f5357" to="#6d7175" />
          <clipPath id="tile">
            <rect x="13" y="12" width="74" height="74" rx="5" />
          </clipPath>
          <clipPath id="disc">
            <circle cx="50" cy="49" r="44" />
          </clipPath>
        </defs>
      </svg>
      <DockGroup apps={dockApps} />
      <div className="flex w-[44.3px] shrink-0 justify-center pt-[23px]">
        <i className="h-[60px] w-[2px] bg-[#4b505c]" />
      </div>
      <DockGroup apps={dockTools} />
      <div className="flex w-[44px] shrink-0 justify-center pt-[7px]">
        <i className="h-[92px] w-[2px] bg-[#565b67]" />
      </div>
      <DockGroup apps={dockFiles} />
    </div>
  );
}

export default function App() {
  return (
    <div className="flex h-[2100px] w-[3360px] flex-col overflow-hidden bg-[#0b101d]">
      <MenuBar />
      <div className="relative flex h-[1926px] shrink-0 flex-col overflow-hidden rounded-[12px] bg-white">
        <TabBar />
        <div className="shrink-0 border-b-2 border-[#c9c9ce] bg-linear-to-b from-[#42414a] via-[#36353f] to-[#33333d]">
          <Toolbar />
          <BookmarkBar />
        </div>
        <div className="mx-[743px] flex h-[1733px] w-[1924px] border-x-2 border-[#e4e4e4] pl-[98px] font-['Liberation_Sans',Arial,sans-serif] text-black">
          <Article />
          <div className="ml-[1px]">
            <Sidebar />
          </div>
        </div>
        <div className="pointer-events-none absolute right-0 bottom-0 left-0 h-[72px] bg-linear-to-b from-transparent via-black/3 to-black/8 [mask-image:linear-gradient(to_right,transparent,black_100px,black_3260px,transparent)]" />
      </div>
      <Dock />
    </div>
  );
}
